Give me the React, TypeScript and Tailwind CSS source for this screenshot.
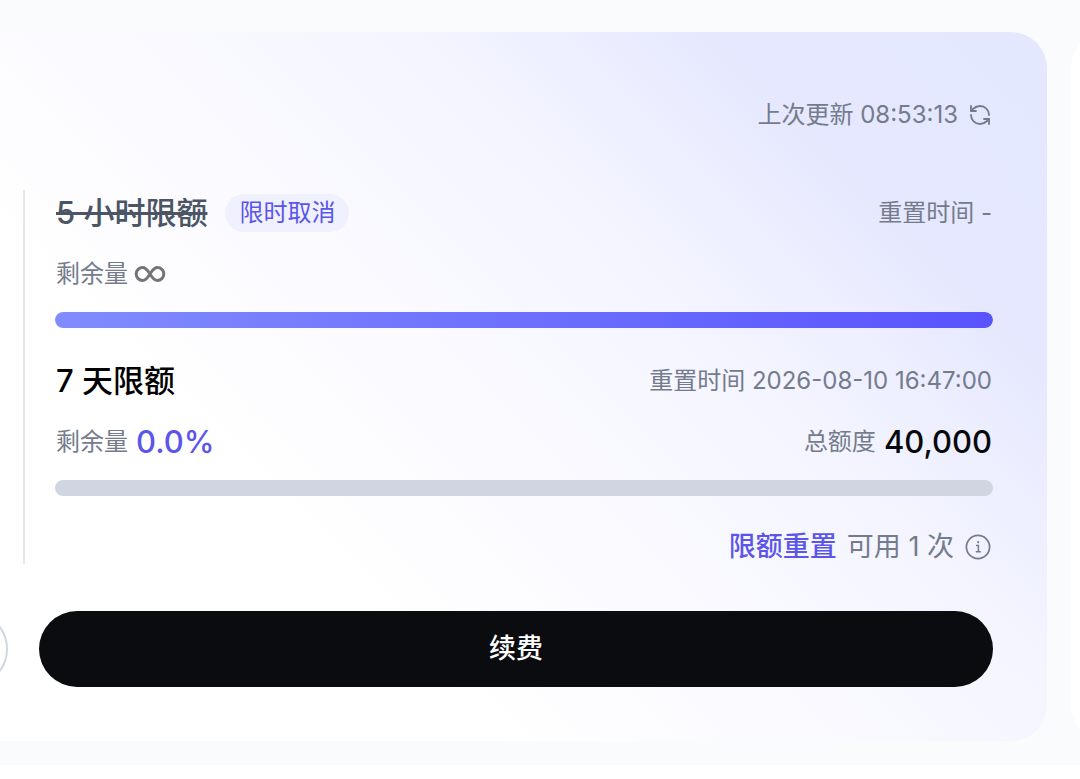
import type { ReactNode } from 'react';
import { RefreshCcw } from 'lucide-react';

function InfoIcon() {
  return (
    <svg className="w-7 h-7 shrink-0" viewBox="0 0 28 28" fill="none" stroke="currentColor" strokeWidth={1.7}>
      <circle cx="14" cy="14" r="11.6" />
      <path d="M12 12.4h2.4v6M11.8 18.8h5" strokeWidth={1.5} />
      <circle cx="14.2" cy="9.2" r="1.1" fill="currentColor" stroke="none" />
    </svg>
  );
}

function InfinityIcon() {
  return (
    <svg
      role="img"
      aria-label="无限"
      className="w-8 h-[18px] shrink-0 text-[#747474]"
      viewBox="0 0 32 18"
      fill="none"
      stroke="currentColor"
      strokeWidth={3}
    >
      <path d="M16 9C13.4 5.2 12 2.5 8.7 2.5a6.5 6.5 0 0 0 0 13C12 15.5 13.4 12.8 16 9s4-6.500 7.300-6.500a6.500 6.500 0 0 1 0 13C20 15.500 18.600 12.800 16 9Z" />
    </svg>
  );
}

function Row({ className, children }: { className: string; children: ReactNode }) {
  return <div className={`flex items-center justify-between px-px ${className}`}>{children}</div>;
}

function ProgressBar({ label, value }: { label: string; value: number }) {
  return (
    <div
      role="progressbar"
      aria-label={label}
      aria-valuenow={value}
      className="h-4 rounded-full bg-[#d0d6e1] overflow-hidden"
    >
      <div
        className="h-full rounded-full bg-linear-to-r/srgb from-[#818cff] to-[#5853ff]"
        style={{ width: `${value}%` }}
      />
    </div>
  );
}

export default function App() {
  return (
    <div className="min-h-screen overflow-hidden bg-white font-['Inter','Noto_Sans_CJK_SC',sans-serif] text-[24px] text-[#747b8c]">
      <main className="flex gap-6 bg-[#fafbfd] pt-8 pb-6">
        <section className="flex-1 rounded-r-[36px] pt-16 pb-[54px] pr-[54px] bg-[linear-gradient(225deg,#e4e8fe_0%,#e5e8fe_19%,#ebecfe_25%,#f3f4ff_35%,#f9f9ff_50%,#ffffff_72%)]">
          <div className="flex h-[38px] items-center justify-end gap-[10px] px-px">
            <span>上次更新 08:53:13</span>
            <button type="button" aria-label="刷新">
              <RefreshCcw className="w-6 h-6" strokeWidth={1.8} />
            </button>
          </div>

          <div className="mt-14 ml-[23px] border-l-2 border-[#e6e7ec] pl-[30px]">
            <Row className="h-[46px]">
              <div className="flex items-center gap-[18px]">
                <h2 className="text-[31px] font-medium text-[#4b5565] line-through">5 小时限额</h2>
                <span className="flex h-[38px] items-center rounded-full bg-[#eff1ff] px-[14px] text-[#5b55ea]">
                  限时取消
                </span>
              </div>
              <span>重置时间 -</span>
            </Row>
            <Row className="mt-4 h-11">
              <div className="flex items-center gap-[6px]">
                <span>剩余量</span>
                <InfinityIcon />
              </div>
            </Row>
            <div className="mt-4">
              <ProgressBar label="5 小时限额" value={100} />
            </div>

            <Row className="mt-[30px] h-[46px]">
              <h2 className="text-[31px] font-medium text-black">7 天限额</h2>
              <span>重置时间 2026-08-10 16:47:00</span>
            </Row>
            <Row className="mt-4 h-11">
              <div className="flex items-center gap-2">
                <span>剩余量</span>
                <span className="text-[31px] font-medium text-[#5b55ea]">0.0%</span>
              </div>
              <div className="flex items-center gap-2">
                <span>总额度</span>
                <span className="text-[31px] font-medium text-[#08090d]">40,000</span>
              </div>
            </Row>
            <div className="mt-4">
              <ProgressBar label="7 天限额" value={0} />
            </div>

            <div className="mt-[34px] flex h-[34px] items-center justify-end gap-[10px] px-px text-[27px]">
              <button type="button" className="font-medium text-[#5b55ea]">限额重置</button>
              <span>可用 1 次</span>
              <InfoIcon />
            </div>
          </div>

          <div className="mt-[47px] flex gap-[31px]">
            <button
              type="button"
              aria-label="管理"
              className="-ml-[92px] h-[76px] w-[100px] shrink-0 rounded-full border-2 border-[#d0d6e4] bg-white"
            />
            <button
              type="button"
              className="h-[76px] flex-1 rounded-full bg-[#0b0c0f] text-[27px] font-medium text-white"
            >
              续费
            </button>
          </div>
        </section>

        <section className="w-[9px] shrink-0">
          <div className="h-full w-24 rounded-[36px] bg-white" />
        </section>
      </main>
    </div>
  );
}
